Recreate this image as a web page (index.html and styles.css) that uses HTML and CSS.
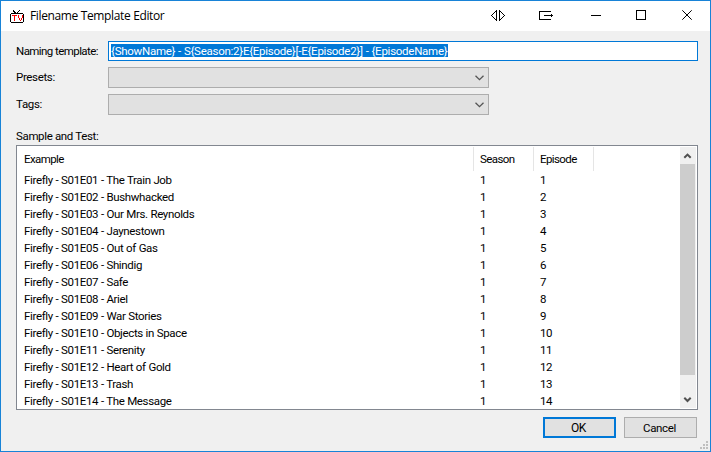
FILE: index.html
```
<!DOCTYPE html>
<html lang="en">
<head>
<meta charset="utf-8">
<title>Filename Template Editor</title>
<link rel="stylesheet" href="styles.css">
</head>
<body>
<div class="window">
  <header class="titlebar">
    <svg class="logo" width="16" height="16" viewBox="0 0 16 16" shape-rendering="crispEdges">
      <path d="M3 0h1v1h1v1h1v1h1v1H5V3H4V2H3zM9 0h1v1H9v1H8v1H7V2h1V1h1z" fill="#000"/>
      <path d="M1 3h12v1h1v8h-1v1H1v-1H0V4h1zM1 4v8h12V4z" fill="#000" fill-rule="evenodd"/>
      <path d="M2 5h5v1H5v5H4V6H2zM8 5h1v3h1v2h1V8h1V5h1v3h-1v2h-1v1h-1v-1H9V8H8z" fill="#f00"/>
    </svg>
    <h1 class="title">Filename Template Editor</h1>
    <div class="controls">
      <svg width="48" height="30" viewBox="1 0 48 30" shape-rendering="crispEdges"><path d="M22.5 9v11M25.5 9v11M21 10.5h2M20 11.5h1M19 12.5h1M18 13.5h1M17 14.5h1M18 15.5h1M19 16.5h1M20 17.5h1M21 18.5h2M25 10.5h2M27 11.5h1M28 12.5h1M29 13.5h1M30 14.5h1M29 15.5h1M28 16.5h1M27 17.5h1M25 18.5h2"/></svg>
      <svg width="48" height="30" viewBox="1 0 48 30" shape-rendering="crispEdges"><path d="M29 10.500H17.500V18.500H29M22 14.500h9M29.500 13v3"/></svg>
      <svg width="47" height="30" viewBox="1 0 47 30" shape-rendering="crispEdges"><path d="M21 14.500h10"/></svg>
      <svg width="46" height="30" viewBox="1 0 46 30" shape-rendering="crispEdges"><path d="M19.500 9.500h9v9h-9z"/></svg>
      <svg width="46" height="30" viewBox="1 0 46 30"><path d="M19.300 9.300l9.400 9.400M28.700 9.300l-9.400 9.400"/></svg>
    </div>
  </header>
  <main class="content">
    <div class="field field-text">
      <span class="label naming">Naming template:</span>
      <div class="input"><span class="selection">{ShowName} - S{Season:2}E{Episode}[-E{Episode2}] - {EpisodeName}</span></div>
    </div>
    <div class="field">
      <span class="label">Presets:</span>
      <div class="combo"><svg width="9" height="6" viewBox="0 0 9 6"><path d="M.5 .7l4 4 4-4"/></svg></div>
    </div>
    <div class="field">
      <span class="label">Tags:</span>
      <div class="combo"><svg width="9" height="6" viewBox="0 0 9 6"><path d="M.5 .7l4 4 4-4"/></svg></div>
    </div>
    <div class="label caption">Sample and Test:</div>
    <section class="list">
      <div class="table">
        <div class="row head"><span>Example</span><span>Season</span><span>Episode</span></div>
        <div class="row"><span>Firefly - S01E01 - The Train Job</span><span>1</span><span>1</span></div>
        <div class="row"><span>Firefly - S01E02 - Bushwhacked</span><span>1</span><span>2</span></div>
        <div class="row"><span>Firefly - S01E03 - Our Mrs. Reynolds</span><span>1</span><span>3</span></div>
        <div class="row"><span>Firefly - S01E04 - Jaynestown</span><span>1</span><span>4</span></div>
        <div class="row"><span>Firefly - S01E05 - Out of Gas</span><span>1</span><span>5</span></div>
        <div class="row"><span>Firefly - S01E06 - Shindig</span><span>1</span><span>6</span></div>
        <div class="row"><span>Firefly - S01E07 - Safe</span><span>1</span><span>7</span></div>
        <div class="row"><span>Firefly - S01E08 - Ariel</span><span>1</span><span>8</span></div>
        <div class="row"><span>Firefly - S01E09 - War Stories</span><span>1</span><span>9</span></div>
        <div class="row"><span>Firefly - S01E10 - Objects in Space</span><span>1</span><span>10</span></div>
        <div class="row"><span>Firefly - S01E11 - Serenity</span><span>1</span><span>11</span></div>
        <div class="row"><span>Firefly - S01E12 - Heart of Gold</span><span>1</span><span>12</span></div>
        <div class="row"><span>Firefly - S01E13 - Trash</span><span>1</span><span>13</span></div>
        <div class="row"><span>Firefly - S01E14 - The Message</span><span>1</span><span>14</span></div>
      </div>
      <div class="scrollbar">
        <svg width="16" height="17" viewBox="0 0 16 17"><path d="M4.300 10.800L7.500 7.600l3.200 3.200"/></svg>
        <div class="thumb"></div>
        <svg width="16" height="17" viewBox="0 0 16 17"><path d="M4.300 6.800l3.200 3.200 3.200-3.200"/></svg>
      </div>
    </section>
    <footer class="actions">
      <div class="button primary">OK</div>
      <div class="button">Cancel</div>
    </footer>
  </main>
  <svg class="grip" width="8" height="8" viewBox="0 0 8 8" shape-rendering="crispEdges"><path d="M6 0h2v2H6zM3 3h2v2H3zM6 3h2v2H6zM0 6h2v2H0zM3 6h2v2H3zM6 6h2v2H6z"/></svg>
</div>
</body>
</html>
```
FILE: styles.css
```
* { box-sizing: border-box; }
body {
  margin: 0;
  font: 11.5px/17px Roboto, "Liberation Sans", sans-serif;
  letter-spacing: -0.35px;
  color: #000;
  overflow: hidden;
}
.window {
  position: relative;
  width: 711px;
  height: 452px;
  border: 1px solid #1883d7;
  background: #f0f0f0;
}
.titlebar {
  display: flex;
  height: 30px;
  padding-left: 9px;
  background: #fff;
}
.logo { margin-top: 9px; }
.title {
  margin: 0 0 0 4px;
  font: 12px/30px "Open Sans", "Noto Sans", sans-serif;
  letter-spacing: -0.36px;
  white-space: nowrap;
}
.controls { display: flex; margin-left: auto; }
.controls path { fill: none; stroke: #000; stroke-width: 1; }
.content { padding: 10px 12px 0 15px; }
.field { display: flex; height: 21px; margin-bottom: 6px; }
.field-text { height: 20px; }
.label { width: 92px; line-height: 21px; white-space: nowrap; }
.naming { letter-spacing: -0.57px; }
.input {
  width: 590px;
  height: 20px;
  padding: 2px;
  border: 1px solid #0078d7;
  background: #fff;
}
.selection {
  display: block;
  width: 337px;
  height: 13px;
  line-height: 14px;
  background: #0078d7;
  color: #fff;
  letter-spacing: -0.26px;
  word-spacing: 0.3px;
  white-space: nowrap;
}
.combo {
  display: flex;
  align-items: center;
  justify-content: flex-end;
  width: 381px;
  padding-right: 4px;
  border: 1px solid #adadad;
  background: #e1e1e1;
}
.combo path { fill: none; stroke: #555; stroke-width: 1.3; }
.caption { height: 24px; line-height: 30px; }
.list {
  display: flex;
  justify-content: space-between;
  height: 265px;
  padding: 1px;
  border: 1px solid #828790;
  background: #fff;
}
.row {
  display: grid;
  grid-template-columns: 456px 60px 60px;
  height: 17px;
  word-spacing: 0.2px;
  white-space: nowrap;
}
.row span { padding-left: 6px; }
.head { height: 24px; margin-bottom: 1px; line-height: 24px; letter-spacing: -0.6px; }
.head span { border-right: 1px solid #e5e5e5; }
.scrollbar {
  display: flex;
  flex-direction: column;
  justify-content: space-between;
  width: 16px;
  height: 261px;
  background: #f0f0f0;
}
.scrollbar path { fill: none; stroke: #505050; stroke-width: 2; }
.thumb { width: 15px; height: 211px; margin-bottom: auto; background: #cdcdcd; }
.actions { display: flex; justify-content: flex-end; gap: 8px; padding: 7px 1px 0 0; }
.button {
  width: 73px;
  height: 21px;
  padding-right: 2px;
  border: 1px solid #adadad;
  background: #e1e1e1;
  line-height: 20px;
  text-align: center;
}
.primary { border: 2px solid #0078d7; line-height: 18px; font-size: 12px; }
.grip { position: absolute; right: 2px; bottom: 2px; fill: #bfbfbf; }
```
